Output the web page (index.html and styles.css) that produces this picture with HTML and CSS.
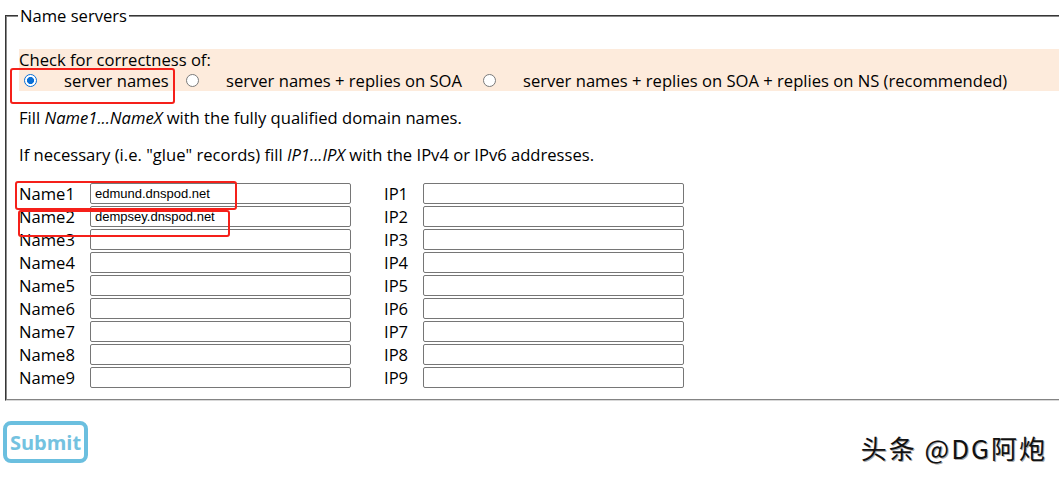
FILE: index.html
```html
<!DOCTYPE html>
<html>
<head>
<meta charset="utf-8">
<link rel="stylesheet" href="styles.css">
</head>
<body>
<form class="page">
  <fieldset class="ns">
    <legend class="ns-legend">Name servers</legend>
    <div class="check">
      <div class="check-title">Check for correctness of:</div>
      <div class="opts">
        <label class="opt opt1"><input type="radio" name="c" class="radio" checked><span>server names</span></label>
        <label class="opt opt2"><input type="radio" name="c" class="radio"><span>server names + replies on SOA</span></label>
        <label class="opt opt3"><input type="radio" name="c" class="radio"><span>server names + replies on SOA + replies on NS (recommended)</span></label>
      </div>
    </div>
    <p class="hint">Fill <i>Name1...NameX</i> with the fully qualified domain names.</p>
    <p class="hint">If necessary (i.e. "glue" records) fill <i>IP1...IPX</i> with the IPv4 or IPv6 addresses.</p>
    <div class="grid">
      <span class="lbl">Name1</span><input class="field" value="edmund.dnspod.net"><span class="lbl ip">IP1</span><input class="field">
      <span class="lbl">Name2</span><input class="field" value="dempsey.dnspod.net"><span class="lbl ip">IP2</span><input class="field">
      <span class="lbl">Name3</span><input class="field"><span class="lbl ip">IP3</span><input class="field">
      <span class="lbl">Name4</span><input class="field"><span class="lbl ip">IP4</span><input class="field">
      <span class="lbl">Name5</span><input class="field"><span class="lbl ip">IP5</span><input class="field">
      <span class="lbl">Name6</span><input class="field"><span class="lbl ip">IP6</span><input class="field">
      <span class="lbl">Name7</span><input class="field"><span class="lbl ip">IP7</span><input class="field">
      <span class="lbl">Name8</span><input class="field"><span class="lbl ip">IP8</span><input class="field">
      <span class="lbl">Name9</span><input class="field"><span class="lbl ip">IP9</span><input class="field">
    </div>
  </fieldset>
  <div class="bottom">
    <button type="button" class="submit">Submit</button>
    <span class="wm">头条 @DG阿炮</span>
  </div>
  <div class="mark mark1"></div>
  <div class="mark mark2"></div>
  <div class="mark mark3"></div>
</form>
</body>
</html>
```
FILE: styles.css
```css
html, body {
  margin: 0;
  padding: 0;
  background: #fff;
  overflow: hidden;
}
body {
  font-family: "Open Sans", "Noto Sans", sans-serif;
  font-size: 16.6px;
  color: #000;
}
.page {
  position: relative;
  width: 1059px;
  height: 477px;
}
.ns {
  margin: 5px 0 0 5px;
  width: 1100px;
  box-sizing: border-box;
  border: 2px groove #d0d0d0;
  border-color: #8a8a8a #d8d8d8 #d8d8d8 #8a8a8a;
  padding: 10px 12px 10px 12px;
}
.ns-legend {
  padding: 0 2px 0 2px;
  margin-left: -1px;
  line-height: 22px;
}
.check {
  background: #fdebdc;
  margin-top: 12px;
  line-height: 21px;
}
.check-title {
  height: 21px;
}
.opts {
  display: flex;
  align-items: center;
  height: 21px;
}
.opt {
  display: flex;
  align-items: center;
  white-space: nowrap;
}
.opt1 { width: 162px; padding-left: 5px; }
.opt2 { width: 297px; }
.radio {
  appearance: none;
  -webkit-appearance: none;
  flex: none;
  width: 13px;
  height: 13px;
  margin: 0;
  border: 1px solid #7a7a7a;
  border-radius: 50%;
  box-sizing: border-box;
  background: #fff;
}
.radio:checked {
  border-color: #0a6fd6;
  background: radial-gradient(circle, #0a6fd6 0 3.3px, #fff 3.8px);
}
.opt span {
  margin-left: 27px;
}
.hint {
  margin: 16px 0 0;
  line-height: 21px;
}
.grid {
  margin-top: 17px;
  display: grid;
  grid-template-columns: 71px 261px 33px 39px 261px;
  grid-auto-rows: 23px;
  align-items: center;
}
.lbl {
  line-height: 20px;
  white-space: nowrap;
}
.ip { grid-column: 4; }
.lbl:not(.ip) { grid-column: 1; }
.field {
  box-sizing: border-box;
  width: 261px;
  height: 21px;
  border: 1px solid #767676;
  border-radius: 2px;
  padding: 0 4px;
  font-family: "Liberation Sans", Arial, sans-serif;
  font-size: 13px;
  color: #000;
  background: #fff;
}
.grid .field:nth-of-type(odd) { grid-column: 2; }
.grid .field:nth-of-type(even) { grid-column: 5; }
.bottom {
  display: flex;
  justify-content: space-between;
  align-items: flex-end;
  margin-top: 20px;
  padding: 0 14px 0 3px;
}
.submit {
  box-sizing: border-box;
  width: 85px;
  height: 42px;
  border: 4px solid #6bbfdf;
  border-radius: 8px;
  background: #fff;
  color: #74c2e0;
  font-family: "Open Sans", "Noto Sans", sans-serif;
  font-weight: 700;
  font-size: 20px;
  padding: 0;
}
.wm {
  font-family: "Noto Sans CJK SC", sans-serif;
  font-size: 26px;
  line-height: 30px;
  letter-spacing: 2px;
  margin-right: -2px;
  color: #111;
  text-shadow: 1px 1px 0 #aaa, -1px -1px 0 #fff;
}
.mark {
  position: absolute;
  border: 2px solid #f5201a;
  border-radius: 3px;
  box-sizing: border-box;
}
.mark1 { left: 10px; top: 63px; width: 165px; height: 36px; }
.mark2 { left: 15px; top: 176px; width: 222px; height: 29px; }
.mark3 { left: 18px; top: 205px; width: 212px; height: 27px; }
```
